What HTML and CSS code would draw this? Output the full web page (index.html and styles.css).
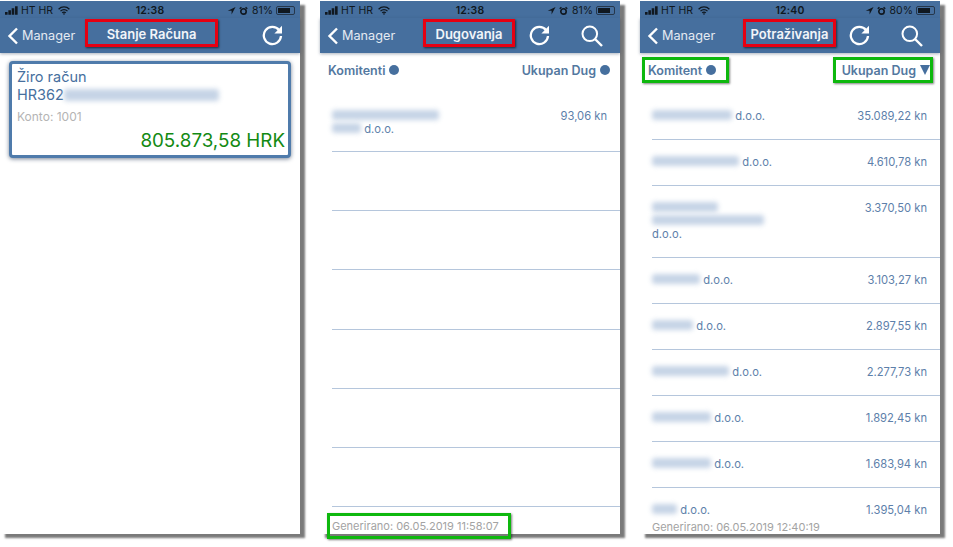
FILE: index.html
```html
<!DOCTYPE html>
<html lang="hr">
<head>
    <meta charset="UTF-8">
    <title>Manager</title>
    <link rel="stylesheet" href="styles.css">
</head>
<body>
<svg class="defs" width="0" height="0">
    <symbol id="i-signal" viewBox="0 0 14 9"><path d="M0 6h2.800v3H0zM3.600 4.300h2.800V9H3.600zM7.200 2.200h2.800V9H7.200zM10.800 0h2.800v9h-2.800z" fill="#101820"/></symbol>
    <symbol id="i-wifi" viewBox="0 0 12 9"><path d="M.6 3.200a7.600 7.600 0 0 1 10.800 0M2.500 5.100a4.900 4.900 0 0 1 7 0M4.200 6.800a2.500 2.500 0 0 1 3.600 0" fill="none" stroke="#101820" stroke-width="1.300"/><path d="M6 9 4.900 7.800a1.600 1.600 0 0 1 2.200 0z" fill="#101820"/></symbol>
    <symbol id="i-arrow" viewBox="0 0 10 10"><path d="M9.500.5 .8 4.600h4.300v4.300z" fill="#101820"/></symbol>
    <symbol id="i-alarm" viewBox="0 0 10 10"><circle cx="5" cy="5.500" r="3" fill="none" stroke="#101820" stroke-width="1.800"/><path d="M.8 2.600 2.700.8M9.200 2.600 7.300.8" stroke="#101820" stroke-width="1.500"/></symbol>
    <symbol id="i-back" viewBox="0 0 12 18"><path d="M10 1.500 2.500 9l7.500 7.500" fill="none" stroke="#fff" stroke-width="2.400"/></symbol>
    <symbol id="i-refresh" viewBox="0 0 21 21"><path d="M17.200 5.200A8.600 8.600 0 1 0 19 11" fill="none" stroke="#fff" stroke-width="2.300"/><path d="M20 .8v7.600h-7.600z" fill="#fff"/></symbol>
    <symbol id="i-search" viewBox="0 0 22 22"><circle cx="8.800" cy="8.800" r="7.300" fill="none" stroke="#fff" stroke-width="2"/><path d="m14 14 7 7" stroke="#fff" stroke-width="2.400"/></symbol>
</svg>

<div class="stage">

    <!-- stanje racuna -->
    <section class="phone">
        <div class="status">
            <div class="status-left">
                <svg class="ic-signal"><use href="#i-signal"/></svg><span>HT HR</span><svg class="ic-wifi"><use href="#i-wifi"/></svg>
            </div>
            <div class="status-time">12:38</div>
            <div class="status-right">
                <svg class="ic-small"><use href="#i-arrow"/></svg><svg class="ic-small"><use href="#i-alarm"/></svg><span>81%</span>
                <div class="battery"><div class="battery-fill fill-81"></div></div>
            </div>
        </div>
        <div class="nav">
            <div class="back back-short"><svg class="ic-back"><use href="#i-back"/></svg>Manager</div>
            <div class="title title-first">Stanje Računa</div>
            <div class="actions">
                <svg class="ic-refresh"><use href="#i-refresh"/></svg>
            </div>
        </div>
        <div class="card">
            <div class="card-name">Žiro račun</div>
            <div class="card-name">HR362<span class="blur blur-iban"></span></div>
            <div class="card-konto">Konto: 1001</div>
            <div class="card-sum">805.873,58 HRK</div>
        </div>
    </section>

    <!-- dugovanja -->
    <section class="phone">
        <div class="status">
            <div class="status-left">
                <svg class="ic-signal"><use href="#i-signal"/></svg><span>HT HR</span><svg class="ic-wifi"><use href="#i-wifi"/></svg>
            </div>
            <div class="status-time">12:38</div>
            <div class="status-right">
                <svg class="ic-small"><use href="#i-arrow"/></svg><svg class="ic-small"><use href="#i-alarm"/></svg><span>81%</span>
                <div class="battery"><div class="battery-fill fill-81"></div></div>
            </div>
        </div>
        <div class="nav">
            <div class="back"><svg class="ic-back"><use href="#i-back"/></svg>Manager</div>
            <div class="title title-dug">Dugovanja</div>
            <div class="actions">
                <svg class="ic-refresh"><use href="#i-refresh"/></svg>
                <svg class="ic-search"><use href="#i-search"/></svg>
            </div>
        </div>
        <div class="head">
            <div class="sort">Komitenti <span class="dot"></span></div>
            <div class="sort">Ukupan Dug <span class="dot"></span></div>
        </div>
        <div class="list">
            <div class="row row-tall">
                <div class="row-name"><span class="blur blur-line b107"></span><span class="blur b29"></span> d.o.o.</div>
                <div class="row-sum">93,06 kn</div>
            </div>
            <div class="row row-empty"></div>
            <div class="row row-empty"></div>
            <div class="row row-empty"></div>
            <div class="row row-empty"></div>
            <div class="row row-empty"></div>
            <div class="row row-empty"></div>
        </div>
        <div class="foot foot-mark">Generirano: 06.05.2019 11:58:07</div>
    </section>

    <!-- potrazivanja -->
    <section class="phone">
        <div class="status">
            <div class="status-left">
                <svg class="ic-signal"><use href="#i-signal"/></svg><span>HT HR</span><svg class="ic-wifi"><use href="#i-wifi"/></svg>
            </div>
            <div class="status-time">12:40</div>
            <div class="status-right">
                <svg class="ic-small"><use href="#i-arrow"/></svg><svg class="ic-small"><use href="#i-alarm"/></svg><span>80%</span>
                <div class="battery"><div class="battery-fill fill-80"></div></div>
            </div>
        </div>
        <div class="nav">
            <div class="back"><svg class="ic-back"><use href="#i-back"/></svg>Manager</div>
            <div class="title title-pot">Potraživanja</div>
            <div class="actions">
                <svg class="ic-refresh"><use href="#i-refresh"/></svg>
                <svg class="ic-search"><use href="#i-search"/></svg>
            </div>
        </div>
        <div class="head">
            <div class="sort sort-mark sort-kom">Komitent <span class="dot"></span></div>
            <div class="sort sort-mark sort-dug">Ukupan Dug <span class="tri"></span></div>
        </div>
        <div class="list">
            <div class="row">
                <div class="row-name"><span class="blur b80"></span> d.o.o.</div>
                <div class="row-sum">35.089,22 kn</div>
            </div>
            <div class="row">
                <div class="row-name"><span class="blur b87"></span> d.o.o.</div>
                <div class="row-sum">4.610,78 kn</div>
            </div>
            <div class="row">
                <div class="row-name"><span class="blur blur-line b66"></span><span class="blur blur-line b112"></span>d.o.o.</div>
                <div class="row-sum">3.370,50 kn</div>
            </div>
            <div class="row">
                <div class="row-name"><span class="blur b48"></span> d.o.o.</div>
                <div class="row-sum">3.103,27 kn</div>
            </div>
            <div class="row">
                <div class="row-name"><span class="blur b41"></span> d.o.o.</div>
                <div class="row-sum">2.897,55 kn</div>
            </div>
            <div class="row">
                <div class="row-name"><span class="blur b77"></span> d.o.o.</div>
                <div class="row-sum">2.277,73 kn</div>
            </div>
            <div class="row">
                <div class="row-name"><span class="blur b59"></span> d.o.o.</div>
                <div class="row-sum">1.892,45 kn</div>
            </div>
            <div class="row">
                <div class="row-name"><span class="blur b59"></span> d.o.o.</div>
                <div class="row-sum">1.683,94 kn</div>
            </div>
            <div class="row row-last">
                <div class="row-name"><span class="blur b25"></span> d.o.o.</div>
                <div class="row-sum">1.395,04 kn</div>
            </div>
        </div>
        <div class="foot">Generirano: 06.05.2019 12:40:19</div>
    </section>

</div>
</body>
</html>
```

FILE: styles.css
```css
*{
    margin: 0;
    padding: 0;
    box-sizing: border-box;
}
body{
    background-color: #fff;
    font-family: Inter, "Liberation Sans", Arial, sans-serif;
    color: #466f9e;
    overflow: hidden;
}
.defs{
    position: absolute;
}
.stage{
    display: flex;
    gap: 20px;
    padding-top: 1px;
    height: 547px;
}
.phone{
    width: 300px;
    height: 533px;
    display: flex;
    flex-direction: column;
    background-color: #fff;
    box-shadow: 5px 4px 2px #7a7a7a;
}

/* status bar */
.status{
    height: 17px;
    flex: none;
    display: flex;
    align-items: center;
    justify-content: space-between;
    padding: 2px 5px 0;
    background-color: #466f9e;
    color: #101820;
    font-size: 10.500px;
}
.status-left,
.status-right{
    flex: 1;
    display: flex;
    align-items: center;
}
.status-right{
    justify-content: flex-end;
}
.status-left span{
    margin: 0 5px 0 3px;
}
.status-time{
    font-weight: 600;
    letter-spacing: .2px;
}
.status-right span{
    margin: 0 3px 0 4px;
}
.ic-signal{
    width: 13px;
    height: 9px;
}
.ic-wifi{
    width: 12px;
    height: 9px;
}
.ic-small{
    width: 9px;
    height: 10px;
    margin-left: 3px;
}
.battery{
    width: 19px;
    height: 9px;
    padding: 1px;
    border: 1px solid #26374b;
    border-radius: 2px;
}
.battery-fill{
    height: 100%;
    background-color: #101820;
}
.fill-81{
    width: 81%;
}
.fill-80{
    width: 80%;
}

/* nav */
.nav{
    height: 35px;
    flex: none;
    display: flex;
    align-items: center;
    background-color: #466f9e;
    box-shadow: 0 1px 3px rgba(40,60,90,.4);
    color: #fff;
    position: relative;
}
.back{
    width: 103px;
    display: flex;
    align-items: center;
    padding-left: 7px;
    font-size: 12.700px;
    color: #e4eaf2;
}
.back-short{
    width: 85px;
}
.ic-back{
    width: 12px;
    height: 18px;
    margin-right: 3px;
}
.title{
    height: 28px;
    line-height: 25px;
    margin-bottom: 5px;
    text-align: center;
    font-size: 13px;
    font-weight: 600;
    color: #f2f5f9;
    border: 3px solid #e60012;
    box-shadow: 1px 1px 2px rgba(0,0,0,.6);
}
.title-first{
    width: 133px;
}
.title-dug{
    width: 92px;
}
.title-pot{
    width: 93px;
}
.actions{
    margin-left: auto;
    padding-right: 17px;
    display: flex;
    align-items: center;
    gap: 31px;
}
.ic-refresh{
    width: 21px;
    height: 21px;
}
.ic-search{
    width: 22px;
    height: 22px;
}

/* racun */
.card{
    margin: 8px 9px 0;
    height: 97px;
    padding: 4px 3px 0 5px;
    background-color: #fff;
    border: 3px solid #4f7bab;
    border-radius: 4px;
    box-shadow: 0 1px 4px rgba(30,50,80,.6);
}
.card-name{
    font-size: 14.500px;
    line-height: 18px;
}
.card-konto{
    margin-top: 3px;
    font-size: 12px;
    line-height: 20px;
    color: #b4b4b4;
}
.card-sum{
    margin-top: 2px;
    text-align: right;
    font-size: 18.800px;
    line-height: 24px;
    color: #138a13;
}
.blur{
    display: inline-block;
    height: 10px;
    border-radius: 3px;
    background-color: #c6d4e6;
    filter: blur(2.500px);
}
.blur-line{
    display: block;
    margin-bottom: 3px;
}
.blur-iban{
    width: 155px;
    height: 12px;
    vertical-align: -1px;
}
.b25{ width: 25px; }
.b29{ width: 29px; }
.b41{ width: 41px; }
.b48{ width: 48px; }
.b59{ width: 59px; }
.b66{ width: 66px; }
.b77{ width: 77px; }
.b80{ width: 80px; }
.b87{ width: 87px; }
.b107{ width: 107px; }
.b112{ width: 112px; }

/* tablica */
.head{
    height: 41px;
    flex: none;
    display: flex;
    justify-content: space-between;
    align-items: flex-start;
    padding: 4px 7px 0 2px;
}
.sort{
    height: 26px;
    padding-left: 3px;
    display: flex;
    align-items: center;
    gap: 4px;
    font-size: 12.500px;
    font-weight: 600;
    color: #53789f;
    border: 3px solid transparent;
}
.sort-mark{
    border-color: #0eb80e;
    box-shadow: 1px 1px 2px rgba(0,0,0,.5);
}
.sort-kom{
    width: 87px;
}
.sort-dug{
    width: 100px;
    justify-content: flex-end;
}
.dot{
    width: 10px;
    height: 10px;
    border-radius: 50%;
    background-color: #466f9e;
}
.tri{
    width: 0;
    height: 0;
    border-left: 5px solid transparent;
    border-right: 5px solid transparent;
    border-top: 10px solid #466f9e;
}
.list{
    flex: 1;
    min-height: 0;
    overflow: hidden;
}
.row{
    display: flex;
    justify-content: space-between;
    margin-left: 12px;
    padding: 16px 13px 16px 0;
    border-bottom: 1px solid #b5c6dc;
    font-size: 11.200px;
    line-height: 13px;
    color: #5d80aa;
}
.row-tall{
    height: 58px;
}
.row-empty{
    height: 59.200px;
}
.row-last{
    border-bottom: 0;
}
.row-name{
    width: 175px;
}
.foot{
    flex: none;
    height: 14px;
    margin-left: 12px;
    font-size: 11px;
    line-height: 14px;
    color: #a3a3a3;
}
.foot-mark{
    width: 184px;
    height: 26px;
    margin: auto 0 -5px 7px;
    padding-left: 2px;
    line-height: 20px;
    border: 3px solid #0eb80e;
    box-shadow: 1px 1px 2px rgba(0,0,0,.5);
    position: relative;
}
```
